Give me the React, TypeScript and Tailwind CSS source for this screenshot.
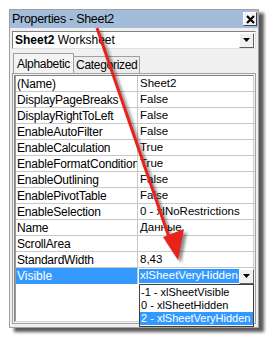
import React from "react";

const rows: [string, string][] = [
  ["(Name)", "Sheet2"],
  ["DisplayPageBreaks", "False"],
  ["DisplayRightToLeft", "False"],
  ["EnableAutoFilter", "False"],
  ["EnableCalculation", "True"],
  ["EnableFormatConditionsCalculation", "True"],
  ["EnableOutlining", "False"],
  ["EnablePivotTable", "False"],
  ["EnableSelection", "0 - xlNoRestrictions"],
  ["Name", "Данные"],
  ["ScrollArea", ""],
  ["StandardWidth", "8,43"],
];

function DropBtn() {
  return (
    <div className="w-[15px] h-[15px] flex items-center justify-center bg-[#f0f0f0] border border-t-white border-l-white border-r-[#606060] border-b-[#606060] shrink-0">
      <svg width="7" height="4" viewBox="0 0 7 4">
        <path d="M0 0H7L3.5 4Z" fill="#000" />
      </svg>
    </div>
  );
}

export default function App() {
  return (
    <div
      className="w-[269px] h-[338px] bg-white relative overflow-hidden text-[12px] leading-none text-black"
      style={{ fontFamily: "Tahoma, 'Liberation Sans', 'DejaVu Sans', sans-serif" }}
    >
      <div className="pt-[9px] pl-[9px]">
        <div className="w-[250px] h-[319px] bg-[#f0f0f0] border border-[#a0a0a0] flex flex-col shadow-[5px_4px_3px_rgba(0,0,0,0.65)]">
          {/* Title bar */}
          <div className="h-[18px] bg-[#a3bcd9] flex items-center justify-between pl-[2px] pr-[1px]">
            <span className="text-[12.5px] tracking-[-0.3px]">Properties - Sheet2</span>
            <div className="w-[14px] h-[14px] bg-[#f4f4f4] border border-t-white border-l-white border-r-[#404040] border-b-[#404040] flex items-center justify-center">
              <svg width="9" height="9" viewBox="0 0 9 9">
                <path d="M1 1L8 8M8 1L1 8" stroke="#000" strokeWidth="2.2" />
              </svg>
            </div>
          </div>
          {/* Combo */}
          <div className="mt-[3px] mx-[2px] h-[18px] bg-white border border-t-[#808080] border-l-[#808080] border-r-[#e0e0e0] border-b-[#e0e0e0] flex items-center justify-between pl-[2px] pr-[1px]">
            <span className="text-[12px]">
              <b>Sheet2</b> Worksheet
            </span>
            <DropBtn />
          </div>
          {/* Tabs */}
          <div className="mt-[4px] mx-[2px] h-[20px] flex items-end pl-[1px]">
            <div className="h-[20px] px-[3px] flex items-center bg-[#f4f4f4] border border-b-0 border-[#a0a0a0] text-[12px] tracking-[-0.3px]">
              Alphabetic
            </div>
            <div className="h-[17px] px-[2px] flex items-center bg-[#ececec] border border-b-0 border-l-0 border-[#a0a0a0] text-[12px] tracking-[-0.3px]">
              Categorized
            </div>
          </div>
          {/* Grid panel */}
          <div className="mx-[2px] mb-[3px] flex-1 border border-[#a0a0a0] bg-[#f4f4f4] p-[1px] relative">
            <div className="h-full bg-white border border-t-[#808080] border-l-[#808080] border-r-[#d0d0d0] border-b-[#d0d0d0] flex">
              <div className="w-[3px] bg-[#e8e8e8] border-r border-[#a0a0a0]" />
              <div className="flex-1 flex flex-col">
                {rows.map(([n, v]) => (
                  <div key={n} className="h-[16px] flex border-b border-[#c8c8c8]">
                    <div className="w-[122px] pl-[1px] border-r border-[#c8c8c8] overflow-hidden whitespace-nowrap flex items-center text-[12px] tracking-[-0.2px]">
                      {n}
                    </div>
                    <div className="flex-1 pl-[2px] flex items-center whitespace-nowrap text-[11.5px]">{v}</div>
                  </div>
                ))}
                <div className="h-[16px] flex">
                  <div className="w-[122px] pl-[1px] bg-[#3399ff] text-white flex items-center border-r border-[#c8c8c8] text-[12px]">
                    Visible
                  </div>
                  <div className="flex-1 flex items-center pl-[1px] pr-[1px]">
                    <span className="bg-[#3399ff] text-white px-[1px] h-[14px] flex items-center text-[11.5px] whitespace-nowrap">xlSheetVeryHidden</span>
                    <div className="flex-1" />
                    <DropBtn />
                  </div>
                </div>
              </div>
            </div>
            {/* dropdown list */}
            <div className="absolute left-[126px] top-[210px] w-[115px] bg-white border border-[#404040] flex flex-col text-[11px] py-[1px] whitespace-nowrap">
              <div className="h-[13px] flex items-center pl-[1px]">-1 - xlSheetVisible</div>
              <div className="h-[13px] flex items-center pl-[1px]">0 - xlSheetHidden</div>
              <div className="h-[13px] flex items-center pl-[1px] bg-[#3399ff] text-white">2 - xlSheetVeryHidden</div>
            </div>
          </div>
        </div>
      </div>
      {/* Red arrow overlay */}
      <svg className="absolute left-0 top-0 pointer-events-none" width="269" height="338" viewBox="0 0 269 338">
        <defs>
          <filter id="sh" x="-20%" y="-20%" width="140%" height="140%">
            <feGaussianBlur stdDeviation="1.5" />
          </filter>
        </defs>
        <g transform="translate(3,3)" opacity="0.45" filter="url(#sh)">
          <line x1="97" y1="28" x2="170" y2="240" stroke="#000" strokeWidth="3" />
          <path d="M163 237 L184 229 L178 260 Z" fill="#000" />
        </g>
        <line x1="97" y1="28" x2="170" y2="240" stroke="#e8231c" strokeWidth="3" />
        <path d="M163 237 L184 229 L178 260 Z" fill="#e8231c" />
      </svg>
    </div>
  );
}
